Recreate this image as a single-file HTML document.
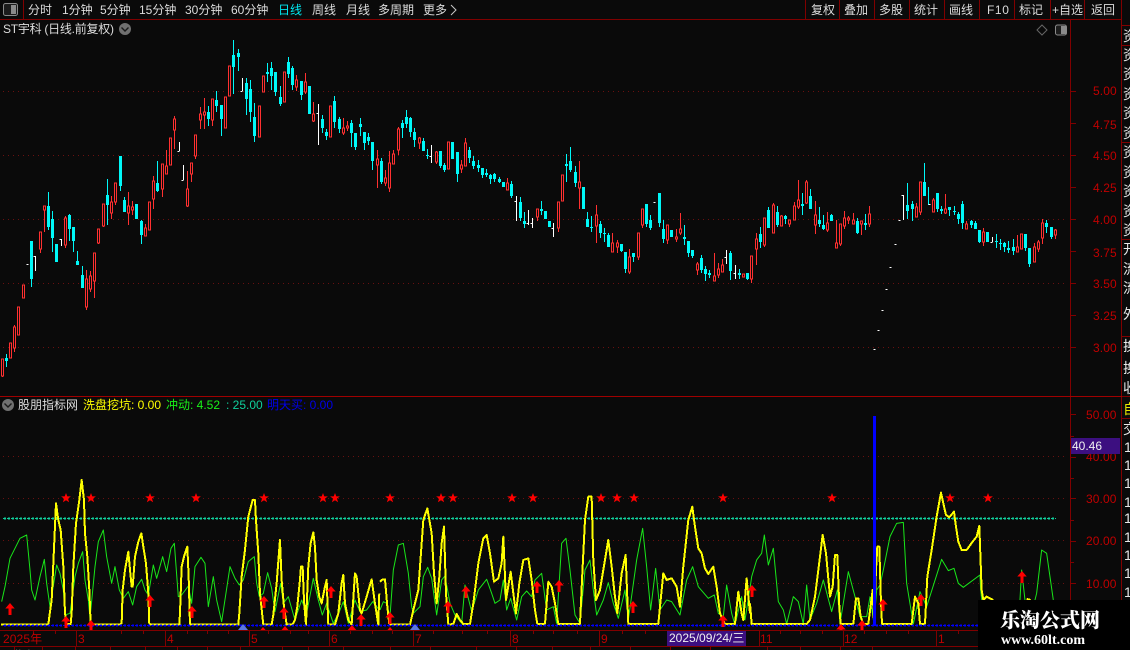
<!DOCTYPE html>
<html><head><meta charset="utf-8"><style>
html,body{margin:0;padding:0;background:#0a0a0a;width:1130px;height:650px;overflow:hidden}
svg{position:absolute;left:0;top:0;display:block}
text{font-family:"Liberation Sans","WenQuanYi Zen Hei","Noto Sans CJK SC",sans-serif;font-size:12px}
.t{fill:#dcdcdc}.a{fill:#c00000;letter-spacing:.1px}.r{fill:#e8e8e8;font-size:14px}
.q{shape-rendering:crispEdges}
.n{vector-effect:non-scaling-stroke;fill:none;stroke-linejoin:round}
</style></head><body>
<svg width="1130" height="650" viewBox="0 0 1130 650">
<defs>
<clipPath id="lc"><rect x="0" y="397" width="1070" height="233"/></clipPath>
<polygon id="s" points="0,-5 1.3,-1.6 4.9,-1.6 2,0.6 3.1,4.3 0,2.2 -3.1,4.3 -2,0.6 -4.9,-1.6 -1.3,-1.6"/>
<path id="ar" d="M0 0L4.7 5.5H1.5V12H-1.5V5.5H-4.7Z"/>
</defs>
<rect width="1130" height="650" fill="#0a0a0a"/>
<!-- frame -->
<g class="q" stroke="#800000" stroke-width="1" fill="none">
<path d="M0 19.5H1121M23.5 0V19M805.5 0V19M839.5 0V19M874.5 0V19M909.5 0V19M944.5 0V19M979.5 0V19M1014.5 0V19M1050.5 0V19M1084.5 0V19"/>
<path d="M1121.5 0V650M1070.5 20V630M0 630.5H1121M0 646.5H1130M1122 25.5H1130M1122 45.5H1130M1122 142.5H1130M1122 239.5H1130M1122 336.5H1130M1122 396.5H1130M1122 418.5H1130"/>
<path d="M1070 91.5h6M1070 123.5h6M1070 155.5h6M1070 187.5h6M1070 219.5h6M1070 251.5h6M1070 283.5h6M1070 315.5h6M1070 347.5h6M1070 414.5h6M1070 436.5h4M1070 457.5h6M1070 478.5h4M1070 498.5h6M1070 520.5h4M1070 541.5h6M1070 562.5h4M1070 583.5h6M1070 605.5h4"/>
<path d="M76.5 631V646M165.5 631V646M249.5 631V646M329.5 631V646M413.5 631V646M510.5 631V646M599.5 631V646M759.5 631V646M843.5 631V646M936.5 631V646"/>
<path d="M33.5 631v3M55.5 631v3M121.5 631v3M143.5 631v3M187.5 631v3M207.5 631v3M228.5 631v3M268.5 631v3M290.5 631v3M308.5 631v3M350.5 631v3M372.5 631v3M392.5 631v3M433.5 631v3M462.5 631v3M487.5 631v3M533.5 631v3M553.5 631v3M577.5 631v3M622.5 631v3M645.5 631v3M780.5 631v3M800.5 631v3M822.5 631v3M864.5 631v3M886.5 631v3M908.5 631v3M958.5 631v3"/>
<path d="M14.5 646v4M42.5 646v4M75.5 646v4M110.5 646v4M145.5 646v4M177.5 646v4M207.5 646v4M240.5 646v4M282.5 646v4M308.5 646v4M343.5 646v4M390.5 646v4M430.5 646v4M476.5 646v4M516.5 646v4M552.5 646v4M590.5 646v4M630.5 646v4M670.5 646v4M710.5 646v4M767.5 646v4M800.5 646v4M840.5 646v4M872.5 646v4"/>
</g>
<path class="q" d="M0 396.5H1122" stroke="#a00000" stroke-width="1"/>
<!-- grid -->
<g class="q" stroke="#6a1010" stroke-width="1" stroke-dasharray="1 4" fill="none">
<path d="M3 91.5H1068M3 155.5H1068M3 219.5H1068M3 283.5H1068M3 347.5H1068"/>
<path d="M3 456.5H1068M3 498.5H1068M3 540.5H1068M3 583.5H1068"/>
</g>
<!-- candles -->
<g transform="translate(.5 0)" class="q" fill="none">
<path stroke="#ff3030" d="M2 359V377M14 325V352M40 249V253M44 210V232M65 216V248M86 270V310M90 271V292M94 281V298M98 243V244M103 226V227M111 196V219M115 202V205M128 192V225M132 201V215M145 224V228M153 176V209M162 189V197M166 150V166M174 116V149M187 171V207M191 174V182M195 156V159M200 107V129M204 98V129M212 120V126M296 75V91M305 73V94M313 102V122M343 118V135M347 121V131M377 150V188M385 170V186M389 151V192M393 150V154M398 127V155M419 137V149M436 151V164M461 160V173M465 138V143M507 178V183M537 217V221M558 228V232M579 161V209M596 205V243M612 233V243M617 240V253M629 249V274M638 257V260M642 225V228M667 240V244M676 229V242M680 213V235M697 262V275M714 253V276M718 263V278M722 259V265M743 274V277M751 279V283M756 233V265M764 245V247M773 203V205M781 215V216M789 224V227M794 202V206M798 180V209M806 180V204M815 201V234M827 212V232M836 220V243M840 244V246M844 211V229M848 216V224M853 213V220M861 224V235M869 206V227M916 203V207M920 212V215M933 198V200M945 194V214M966 221V224M983 228V246M1017 235V247M1034 243V247M1038 240V252M1042 219V244M1055 229V239"/>
<path stroke="#ff3030" fill="#0a0a0a" d="M1 359h2v17h-2zM9 343h2v15h-2zM13 327h2v21h-2zM17 307h2v28h-2zM22 285h2v13h-2zM39 232h2v17h-2zM43 206h2v4h-2zM64 218h2v27h-2zM85 279h2v28h-2zM89 276h2v13h-2zM93 253h2v28h-2zM97 229h2v14h-2zM102 204h2v22h-2zM110 202h2v11h-2zM114 183h2v19h-2zM127 206h2v7h-2zM131 207h2v3h-2zM144 228h2v8h-2zM148 202h2v28h-2zM152 181h2v18h-2zM161 164h2v25h-2zM165 166h2v8h-2zM169 138h2v27h-2zM173 119h2v11h-2zM186 189h2v17h-2zM190 163h2v11h-2zM194 135h2v21h-2zM199 114h2v6h-2zM203 112h2v3h-2zM211 99h2v21h-2zM224 97h2v31h-2zM228 66h2v30h-2zM258 106h2v31h-2zM262 76h2v16h-2zM283 72h2v30h-2zM295 80h2v7h-2zM304 82h2v10h-2zM312 114h2v7h-2zM329 106h2v31h-2zM342 128h2v5h-2zM346 126h2v2h-2zM376 159h2v6h-2zM384 178h2v5h-2zM388 163h2v25h-2zM392 154h2v10h-2zM397 129h2v21h-2zM418 138h2v5h-2zM435 152h2v10h-2zM447 142h2v27h-2zM460 165h2v4h-2zM464 143h2v23h-2zM506 183h2v7h-2zM536 209h2v8h-2zM557 202h2v26h-2zM561 175h2v26h-2zM578 182h2v6h-2zM595 215h2v11h-2zM611 243h2v9h-2zM616 243h2v4h-2zM628 257h2v15h-2zM637 233h2v24h-2zM641 209h2v16h-2zM666 225h2v15h-2zM675 237h2v2h-2zM679 229h2v4h-2zM696 264h2v6h-2zM713 276h2v5h-2zM717 269h2v6h-2zM721 265h2v7h-2zM742 274h2v3h-2zM750 256h2v23h-2zM755 239h2v10h-2zM763 218h2v27h-2zM772 205h2v28h-2zM780 216h2v10h-2zM788 220h2v4h-2zM793 206h2v14h-2zM797 200h2v7h-2zM805 182h2v21h-2zM814 215h2v10h-2zM826 223h2v7h-2zM835 243h2v5h-2zM839 224h2v20h-2zM843 218h2v8h-2zM847 218h2v2h-2zM852 220h2v4h-2zM860 221h2v3h-2zM868 214h2v10h-2zM915 207h2v10h-2zM919 182h2v30h-2zM932 200h2v12h-2zM944 209h2v4h-2zM965 224h2v5h-2zM982 232h2v10h-2zM1016 247h2v5h-2zM1020 234h2v15h-2zM1033 247h2v15h-2zM1037 242h2v7h-2zM1041 223h2v15h-2zM1054 230h2v5h-2z"/>
<path stroke="#00f8f8" d="M6 354V367M31 279V287M48 192V230M52 211V252M69 214V241M73 241V252M77 251V261M82 266V275M107 179V225M120 186V191M124 197V200M141 220V244M157 161V192M208 106V126M216 91V112M221 119V136M233 40V94M238 49V71M246 78V115M250 80V122M254 103V142M267 63V82M271 62V90M275 92V96M280 86V106M288 57V78M292 66V90M301 95V100M309 86V88M322 115V133M326 129V140M334 96V128M339 117V133M351 120V147M355 147V150M360 118V136M364 132V150M368 133V145M372 161V170M381 158V184M402 120V138M406 110V128M410 117V137M414 128V147M423 138V141M427 149V159M440 166V168M444 163V172M452 142V159M457 174V182M469 147V163M473 156V169M478 160V172M482 175V178M486 169V177M490 174V184M494 173V182M499 177V183M511 181V198M520 197V221M524 212V228M541 201V215M545 211V219M549 221V227M566 154V182M570 147V172M575 166V187M587 212V219M591 216V232M600 221V238M604 228V242M608 233V247M621 251V252M625 269V273M633 257V262M646 224V227M650 215V230M659 223V227M663 220V243M671 230V237M684 225V245M688 253V257M692 256V258M701 255V273M705 266V281M709 270V278M730 251V280M739 269V279M747 279V280M760 227V248M768 207V210M777 206V227M785 215V224M802 193V215M810 189V196M819 207V227M823 215V230M831 214V221M857 218V234M865 214V230M907 183V219M912 201V221M924 163V182M928 187V205M937 209V212M941 206V214M949 210V216M954 206V215M958 212V224M962 201V229M971 220V228M975 221V229M979 242V243M996 234V248M1000 239V250M1004 242V252M1008 241V253M1013 239V255M1025 248V251M1029 264V267M1046 220V233M1051 237V239"/>
<path stroke="#00f8f8" stroke-width="3" d="M6 358V361M31 241V279M48 206V227M52 219V238M56 244V262M69 215V229M73 227V241M77 261V265M82 275V288M107 195V205M120 156V186M124 200V212M136 204V219M141 221V235M157 183V191M208 112V119M216 100V106M221 105V119M233 55V67M238 53V57M246 83V99M250 89V112M254 117V136M267 72V74M271 68V76M275 72V92M280 97V104M288 62V74M292 68V85M301 81V95M309 86V114M322 119V128M326 132V136M334 101V122M339 119V129M351 123V133M355 133V147M360 124V127M364 132V143M368 137V141M372 142V161M381 161V182M402 123V128M406 117V124M410 118V132M414 132V140M423 141V151M427 155V156M440 151V166M444 165V170M452 142V159M457 152V174M469 150V158M473 161V166M478 165V168M482 168V175M486 173V175M490 175V179M494 174V179M499 179V182M503 182V187M511 184V196M520 202V218M524 221V224M541 209V211M545 211V219M549 221V227M566 164V166M570 161V170M575 172V183M583 187V209M587 219V227M591 227V228M600 224V233M604 233V234M608 235V247M621 244V251M625 252V269M633 253V257M646 204V224M650 220V228M659 193V223M663 229V239M671 230V237M684 237V239M688 241V253M692 250V256M701 258V270M705 269V274M709 273V275M730 253V271M739 273V275M747 273V279M760 234V242M768 210V228M777 212V225M785 216V219M802 204V206M810 196V209M819 220V224M823 225V229M831 215V221M857 221V233M865 223V225M907 205V211M912 204V209M924 182V196M937 193V209M941 209V211M949 207V210M954 211V212M958 214V219M962 204V223M971 221V225M975 223V229M979 230V242M987 232V242M996 241V242M1000 243V244M1004 243V247M1008 248V250M1013 247V251M1025 234V248M1029 248V264M1046 223V227M1051 227V237"/>
<path stroke="#fff" d="M26 264.5h2M35 256V271M33 256.5h2M61 239V246M59 239.5h2M179 142V151M177 151.5h2M183 165V180M181 180.5h2M242 78V91M240 91.5h2M318 104V145M316 113.5h2M431 145V163M429 156.5h2M516 196V221M514 201.5h2M528 210V225M526 223.5h2M532 218V228M530 223.5h2M553 223V237M551 228.5h2M653 202.5h2M726 250V264M724 257.5h2M735 265V279M733 273.5h2M873 349.5h2M877 330.5h2M881 310.5h2M885 289.5h2M889 267.5h2M894 244.5h2M898 220.5h2M903 195V220M901 195.5h2M928 204.5h2M992 237V242M990 242.5h2"/>
</g>
<!-- lower panel -->
<g clip-path="url(#lc)">
<g class="q" fill="none">
<path d="M3 518.5H1056" stroke="#10cf9c" stroke-dasharray="3 1"/>
<path d="M4.5 518.5H1056" stroke="#10cf9c" stroke-width="3" stroke-dasharray="1 3"/>
</g>
<!-- green -->
<g fill="none" stroke="#19e619">
<polyline class="n" stroke-width="1" transform="translate(0 500) scale(.3333)" points="5,305 15,260 30,175 45,145 60,115 80,105 90,210 95,270 105,300 120,230 133,178 140,250 150,320 158,270 170,195 180,220 190,270 195,345 210,340 225,230 235,190 248,155 255,240 265,300 270,355 285,200 295,125 310,90 320,170 335,250 345,200 358,270 370,295 385,275 398,315 410,260 425,238 435,270 445,285 460,195 470,235 488,170 500,215 513,145 523,130 535,290 545,285 565,258 575,310 585,200 603,172 615,190 625,320 640,230 650,300 665,365 690,200 705,235 718,255 730,240 745,185 763,170 770,250 778,290 790,280 803,218 815,265 825,335 842,250 850,310 865,290 885,360 905,300 920,340 940,235 955,300 967,345 980,310 1000,370 1018,335 1030,305 1045,370 1065,300 1080,335 1100,330 1118,305 1138,330"/>
<polyline class="n" stroke-width="1" transform="translate(380 500) scale(.3333)" points="0,330 10,305 20,310 30,350 40,210 55,135 70,130 85,220 95,320 100,340 120,320 130,230 143,202 155,235 170,345 185,240 195,228 210,310 225,345 245,370 255,255 275,335 295,270 320,238 335,280 345,310 360,300 370,240 380,330 392,295 410,360 425,290 440,273 455,290 465,240 485,220 500,330 520,320 530,370 545,130 558,115 570,210 585,345 600,370 615,210 630,180 640,270 650,345 670,300 685,248 700,310 715,355 735,270 745,360 770,180 788,85 800,200 812,330 827,205 840,330 860,300 875,305 900,345 920,240 938,200 955,260 985,295 1003,285 1015,340 1030,350 1040,255 1055,340 1065,375 1085,290 1095,360 1110,265"/>
<polyline class="n" stroke-width="1" transform="translate(750 400) scale(.3333)" points="0,565 5,530 20,480 35,460 43,405 55,495 70,445 85,605 100,630 110,672 130,590 145,605 160,672 170,555 180,660 200,610 220,540 245,635 262,570 270,672 295,515 315,590 330,650 350,650 360,590 372,672 380,570 390,555 400,510 420,410 440,370 460,367 470,550 490,672 510,575 530,620 575,478 595,512 612,505 625,550 640,562 690,525 692,570 700,640 800,640 810,600 815,510 825,600 845,640 860,580 875,450 890,460 910,600"/>
</g>
<!-- yellow -->
<g fill="none" stroke="#ffff00" class="q">
<polyline class="n" stroke-width="2" transform="translate(0 500) scale(.3333)" points="3,374 145,374 148,350 155,300 160,190 168,10 175,60 182,90 190,200 195,340 200,372 212,372 215,340 220,200 228,70 238,0 245,-60 252,0 255,100 262,170 268,270 272,374 360,374 365,370 368,270 375,210 385,155 392,230 395,260 398,260 405,170 415,125 424,100 430,140 438,190 445,280 448,374 538,374 540,340 545,200 552,170 562,140 566,230 570,374 715,374 718,340 725,230 735,150 745,50 758,0 765,0 768,60 775,160 780,280 790,374 815,374 820,345 830,250 840,120 845,240 852,320 860,374 878,374 885,360 892,320 900,240 903,200 908,200 912,300 918,374 925,200 932,130 940,97 945,140 950,240 958,290 965,310 975,260 980,240 985,374 1005,374 1015,340 1025,250 1030,225 1035,310 1045,360 1055,374 1065,220 1070,230 1080,330 1085,340 1100,290 1115,238 1125,310 1135,374 1138,280"/>
<polyline class="n" stroke-width="2" transform="translate(380 500) scale(.3333)" points="0,245 8,238 15,238 22,320 28,374 90,374 100,330 115,270 125,130 130,60 142,25 155,100 162,220 170,310 178,230 185,130 192,80 198,280 205,374 220,372 230,342 240,360 250,372 270,372 280,310 295,190 310,115 320,105 330,160 342,245 355,235 365,190 370,110 378,300 392,215 400,280 408,340 418,250 430,180 445,175 455,240 465,330 472,372 495,372 505,245 515,260 525,310 535,372 600,372 607,220 615,60 625,-10 635,-10 640,180 648,300 660,270 675,180 685,120 695,200 705,290 712,340 725,220 737,165 745,372 835,372 850,220 860,240 875,235 890,260 900,320 910,200 925,60 937,20 945,80 955,145 965,160 975,205 985,222 1000,200 1010,260 1020,340 1035,372 1065,372 1075,275 1085,340 1090,360 1100,235 1110,340"/>
<polyline class="n" stroke-width="2" transform="translate(750 400) scale(.3333)" points="0,610 5,672 170,672 180,660 195,590 210,470 218,405 228,460 240,590 248,560 255,465 262,465 268,620 272,672 310,672 318,595 325,595 332,650 340,672 355,672 368,570 372,672 378,510 382,440 388,440 392,580 396,672 485,672 495,590 505,610 510,672 525,672 532,530 545,450 560,350 573,278 580,310 588,345 598,352 612,335 618,380 625,425 635,450 650,450 668,425 680,410 688,378 695,570 700,600 710,590 730,600"/>
<polyline class="n" stroke-width="2" transform="translate(750 400) scale(.3333)" points="830,597 842,600"/>
</g>
<!-- blue -->
<g class="q" fill="none">
<path d="M3 625.5H978" stroke="#0000ff" stroke-width="1" stroke-dasharray="3 1"/>
<path d="M4.5 625.5H978" stroke="#0000ff" stroke-width="3" stroke-dasharray="1 3"/>
<rect x="873" y="416" width="3" height="210" fill="#0000ff"/>
</g>
<g fill="#5a78e0"><polygon points="243,624 238,630 248,630"/><polygon points="415,624 410,630 420,630"/></g>
<g fill="#ff0000">
<use href="#s" x="66" y="498"/><use href="#s" x="91" y="498"/><use href="#s" x="150" y="498"/><use href="#s" x="196" y="498"/><use href="#s" x="264" y="498"/><use href="#s" x="323" y="498"/><use href="#s" x="335" y="498"/><use href="#s" x="390" y="498"/><use href="#s" x="441" y="498"/><use href="#s" x="453" y="498"/><use href="#s" x="512" y="498"/><use href="#s" x="533" y="498"/><use href="#s" x="601" y="498"/><use href="#s" x="617" y="498"/><use href="#s" x="634" y="498"/><use href="#s" x="723" y="498"/><use href="#s" x="832" y="498"/><use href="#s" x="950" y="498"/><use href="#s" x="988" y="498"/>
<use href="#ar" x="10" y="603"/><use href="#ar" x="66" y="616"/><use href="#ar" x="91" y="620"/><use href="#ar" x="150" y="595"/><use href="#ar" x="192" y="606"/><use href="#ar" x="264" y="596"/><use href="#ar" x="284" y="607"/><use href="#ar" x="331" y="586"/><use href="#ar" x="361" y="614"/><use href="#ar" x="390" y="612"/><use href="#ar" x="448" y="601"/><use href="#ar" x="466" y="586"/><use href="#ar" x="537" y="581"/><use href="#ar" x="559" y="580"/><use href="#ar" x="633" y="601"/><use href="#ar" x="723" y="615"/><use href="#ar" x="752" y="585"/><use href="#ar" x="883" y="599"/><use href="#ar" x="921" y="594"/><use href="#ar" x="1022" y="571"/><use href="#ar" x="862" y="620"/><use href="#ar" x="841" y="624"/>
<use href="#ar" x="263" y="627"/><use href="#ar" x="285" y="626"/><use href="#ar" x="352" y="625"/><use href="#ar" x="390" y="627"/>
</g>
</g>
<!-- toolbar -->
<rect x="3.5" y="3.5" width="14" height="12" rx="2" fill="#1c1c1c" stroke="#8a8a8a" stroke-width="1"/>
<rect x="11" y="5" width="5" height="9" fill="#8a8a8a"/>
<text class="t" x="28" y="14">分时</text>
<text class="t" x="62" y="14">1分钟</text>
<text class="t" x="100" y="14">5分钟</text>
<text class="t" x="139" y="14">15分钟</text>
<text class="t" x="185" y="14">30分钟</text>
<text class="t" x="231" y="14">60分钟</text>
<text x="278" y="14" fill="#00e8f0">日线</text>
<text class="t" x="312" y="14">周线</text>
<text class="t" x="346" y="14">月线</text>
<text class="t" x="378" y="14">多周期</text>
<text class="t" x="423" y="14">更多</text>
<path d="M451 5L456 10L451 15" fill="none" stroke="#c8c8c8" stroke-width="1"/>
<text class="t" x="811" y="14">复权</text>
<text class="t" x="844" y="14">叠加</text>
<text class="t" x="879" y="14">多股</text>
<text class="t" x="914" y="14">统计</text>
<text class="t" x="949" y="14">画线</text>
<text class="t" x="987" y="14" letter-spacing=".6">F10</text>
<text class="t" x="1019" y="14">标记</text>
<text class="t" x="1052" y="14">+自选</text>
<text class="t" x="1091" y="14">返回</text>
<!-- title -->
<text class="t" x="3" y="33" textLength="111" lengthAdjust="spacing">ST宇科 (日线.前复权)</text>
<circle cx="125" cy="29" r="6" fill="#707070"/>
<path d="M121.5 27.5L125 31L128.5 27.5" fill="none" stroke="#1a1a1a" stroke-width="1.4"/>
<path d="M1042 25L1047 30L1042 35L1037 30Z" fill="none" stroke="#666" stroke-width="1"/>
<rect x="1055.5" y="25" width="11" height="10" rx="2" fill="#1c1c1c" stroke="#8a8a8a"/>
<rect x="1061" y="26" width="5" height="8" fill="#8a8a8a"/>
<!-- axis labels -->
<text class="a" x="1093" y="95">5.00</text>
<text class="a" x="1093" y="129">4.75</text>
<text class="a" x="1093" y="160">4.50</text>
<text class="a" x="1093" y="192">4.25</text>
<text class="a" x="1093" y="224">4.00</text>
<text class="a" x="1093" y="257">3.75</text>
<text class="a" x="1093" y="288">3.50</text>
<text class="a" x="1093" y="320">3.25</text>
<text class="a" x="1093" y="352">3.00</text>
<text class="a" x="1086" y="419">50.00</text>
<text class="a" x="1086" y="461">40.00</text>
<text class="a" x="1086" y="503">30.00</text>
<text class="a" x="1086" y="545">20.00</text>
<text class="a" x="1086" y="588">10.00</text>
<rect x="1071" y="438" width="49" height="16" fill="#3c0f80"/>
<text x="1072" y="450" fill="#f0f0f0">40.46</text>
<!-- right column -->
<text class="r" x="1123" y="41">资</text><text class="r" x="1123" y="60">资</text><text class="r" x="1123" y="79">资</text><text class="r" x="1123" y="99">资</text><text class="r" x="1123" y="118">资</text><text class="r" x="1123" y="138">资</text><text class="r" x="1123" y="157">资</text><text class="r" x="1123" y="177">资</text><text class="r" x="1123" y="196">资</text><text class="r" x="1123" y="216">资</text><text class="r" x="1123" y="235">资</text><text class="r" x="1123" y="254">开</text><text class="r" x="1123" y="274">流</text><text class="r" x="1123" y="293">流</text><text class="r" x="1123" y="319">外</text><text class="r" x="1123" y="351">换</text><text class="r" x="1123" y="373">换</text><text class="r" x="1123" y="393">收</text>
<text x="1123" y="414" fill="#e8e800" style="font-size:14px">自</text>
<text class="r" x="1123" y="434">交</text>
<text class="r" x="1124" y="452">1</text><text class="r" x="1124" y="470">1</text><text class="r" x="1124" y="488">1</text><text class="r" x="1124" y="507">1</text><text class="r" x="1124" y="523">1</text><text class="r" x="1124" y="542">1</text><text class="r" x="1124" y="560">1</text><text class="r" x="1124" y="578">1</text><text class="r" x="1124" y="597">1</text>
<!-- lower header -->
<circle cx="8" cy="405" r="6" fill="#707070"/>
<path d="M4.5 403.5L8 407L11.5 403.5" fill="none" stroke="#1a1a1a" stroke-width="1.4"/>
<text class="t" x="18" y="409">股朋指标网</text>
<text x="83" y="409" fill="#ffff00">洗盘挖坑: 0.00</text>
<text x="166" y="409" fill="#19f019">冲动: 4.52</text>
<text x="226" y="409" fill="#10cf9c"> : 25.00</text>
<text x="267" y="409" fill="#0000e8">明天买: 0.00</text>
<!-- date axis -->
<text class="a" x="3" y="643">2025年</text>
<text class="a" x="78" y="643">3</text><text class="a" x="167" y="643">4</text><text class="a" x="251" y="643">5</text><text class="a" x="331" y="643">6</text><text class="a" x="415" y="643">7</text><text class="a" x="512" y="643">8</text><text class="a" x="601" y="643">9</text><text class="a" x="760" y="643">11</text><text class="a" x="844" y="643">12</text><text class="a" x="938" y="643">1</text>
<rect x="667" y="631" width="79" height="15" fill="#3c0f80"/>
<text x="669" y="642" fill="#f0f0f0">2025/09/24/三</text>
<text class="t" x="14" y="660">指标</text>
<text x="845" y="660" fill="#00e8f0">主图</text>
<!-- watermark -->
<rect x="978" y="600" width="152" height="50" fill="#000"/>
<text x="1000" y="627" fill="#fff" style="font-family:'Noto Serif CJK SC','Liberation Serif',serif;font-size:20px;font-weight:900">乐淘公式网</text>
<text x="1001" y="644" fill="#fff" style="font-family:'Liberation Serif',serif;font-size:14px;font-weight:700">www.60lt.com</text>
</svg>
</body></html>
